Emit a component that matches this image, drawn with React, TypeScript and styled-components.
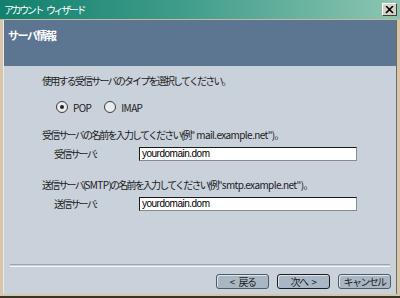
import React from "react";
import styled, { createGlobalStyle } from "styled-components";

const Global = createGlobalStyle`
  html, body {
    margin: 0;
    padding: 0;
    background: #d6c6ad;
  }
  body {
    font-family: "Noto Sans CJK JP", "Liberation Sans", sans-serif;
  }
`;

const Window = styled.div`
  width: 400px;
  height: 298px;
  display: flex;
  flex-direction: column;
  background: #d6c6ad;
  box-sizing: border-box;
  border-bottom: 2px solid #3a3328;
  overflow: hidden;
`;

const TitleBar = styled.div`
  height: 19px;
  flex: none;
  display: flex;
  align-items: center;
  justify-content: space-between;
  padding: 0 3px 0 4px;
  background: linear-gradient(to right, #12806e 0%, #3f9c8a 45%, #8cc6b2 100%);
  color: #fff;
  font-size: 10px;
  letter-spacing: -2.4px;
  border-bottom: 1px solid #c8b89c;
`;

const CloseBtn = styled.div`
  width: 15px;
  height: 13px;
  box-sizing: border-box;
  background: #d6d2c6;
  border: 1px solid;
  border-color: #fff #404040 #404040 #fff;
  display: flex;
  align-items: center;
  justify-content: center;
`;

const Client = styled.div`
  flex: 1;
  display: flex;
  flex-direction: column;
  margin: 0 3px 2px 3px;
  border-left: 1px solid #f0e8dc;
  border-right: 1px solid #7a6a50;
`;

const Header = styled.div`
  height: 46px;
  flex: none;
  background: #5c7591;
  color: #fff;
  font-weight: bold;
  font-size: 11px;
  letter-spacing: -1.5px;
  padding: 7px 0 0 4px;
  box-sizing: border-box;
`;

const Body = styled.div`
  flex: 1;
  background: #c9d1db;
  display: flex;
  flex-direction: column;
  font-size: 10px;
  letter-spacing: -1.8px;
  color: #1c1c1c;
`;

const Latin = styled.span`
  letter-spacing: -0.6px;
`;

const Gap = styled.span<{ $w: number }>`
  display: inline-block;
  width: ${(p) => p.$w}px;
`;

const Content = styled.div`
  flex: 1;
  padding: 8px 0 0 38px;
  display: flex;
  flex-direction: column;
`;

const Line = styled.div<{ $top: number }>`
  margin-top: ${(p) => p.$top}px;
  line-height: 14px;
  white-space: nowrap;
`;

const RadioRow = styled.div`
  display: flex;
  align-items: center;
  gap: 13px;
  margin-top: 12px;
  padding-left: 14px;
  height: 14px;
`;

const RadioItem = styled.label`
  display: flex;
  align-items: center;
  gap: 5px;
`;

const RadioDot = styled.span<{ $on?: boolean }>`
  width: 10px;
  height: 10px;
  border-radius: 50%;
  border: 1px solid #3a3a3a;
  background: #e8ecf0;
  display: flex;
  align-items: center;
  justify-content: center;
  &::after {
    content: "";
    width: 4px;
    height: 4px;
    border-radius: 50%;
    background: ${(p) => (p.$on ? "#222" : "transparent")};
  }
`;

const FieldRow = styled.div`
  display: flex;
  align-items: center;
  margin-top: 4px;
  padding-left: 12px;
`;

const FieldLabel = styled.span`
  width: 85px;
`;

const Input = styled.div`
  width: 218px;
  height: 14px;
  box-sizing: border-box;
  background: #fff;
  border: 1px solid;
  border-color: #1a1a1a #8a8a8a #8a8a8a #1a1a1a;
  font-size: 10px;
  letter-spacing: -0.5px;
  line-height: 12px;
  padding-left: 2px;
  font-family: "Liberation Sans", sans-serif;
  color: #000;
`;

const Divider = styled.div`
  margin: 2px 6px 0;
  height: 1px;
  border-top: 1px solid #9ea4ae;
  border-bottom: 1px solid #f4f6f8;
`;

const ButtonBar = styled.div`
  display: flex;
  justify-content: flex-end;
  gap: 8px;
  padding: 7px 5px 5px 0;
`;

const Button = styled.button<{ $default?: boolean }>`
  width: 53px;
  height: 15px;
  padding: 0;
  box-sizing: border-box;
  font-family: "Noto Sans CJK JP", sans-serif;
  font-size: 10px;
  letter-spacing: -1.6px;
  line-height: 12px;
  color: #222;
  background: #a9b6c4;
  border: 1px solid ${(p) => (p.$default ? "#1e1e1e" : "#505a66")};
  border-radius: 3px;
  box-shadow: inset 1px 1px 0 #dfe5ec;
`;

export default function App() {
  return (
    <>
      <Global />
      <Window>
        <TitleBar>
          <span>
            アカウント<Gap $w={4} />ウィザード
          </span>
          <CloseBtn>
            <svg width="9" height="8" viewBox="0 0 9 8">
              <path d="M1 0 L8 7 M8 0 L1 7" stroke="#000" strokeWidth="1.6" />
            </svg>
          </CloseBtn>
        </TitleBar>
        <Client>
          <Header>サーバ情報</Header>
          <Body>
            <Content>
              <Line $top={0}>使用する受信サーバのタイプを選択してください。</Line>
              <RadioRow>
                <RadioItem>
                  <RadioDot $on />
                  <Latin>POP</Latin>
                </RadioItem>
                <RadioItem>
                  <RadioDot />
                  <Latin>IMAP</Latin>
                </RadioItem>
              </RadioRow>
              <Line $top={14}>
                受信サーバの名前を入力してください(例<Latin>" mail.example.net")</Latin>。
              </Line>
              <FieldRow>
                <FieldLabel>
                  受信サーバ<Latin>:</Latin>
                </FieldLabel>
                <Input>yourdomain.dom</Input>
              </FieldRow>
              <Line $top={17}>
                送信サーバ(<Latin>SMTP</Latin>)の名前を入力してください(例
                <Latin>"smtp.example.net")</Latin>。
              </Line>
              <FieldRow>
                <FieldLabel>
                  送信サーバ<Latin>:</Latin>
                </FieldLabel>
                <Input>yourdomain.dom</Input>
              </FieldRow>
            </Content>
            <Divider />
            <ButtonBar>
              <Button>
                <Latin>&lt;</Latin>
                <Gap $w={4} />
                戻る
              </Button>
              <Button $default>
                次へ<Gap $w={4} />
                <Latin>&gt;</Latin>
              </Button>
              <Button>キャンセル</Button>
            </ButtonBar>
          </Body>
        </Client>
      </Window>
    </>
  );
}
